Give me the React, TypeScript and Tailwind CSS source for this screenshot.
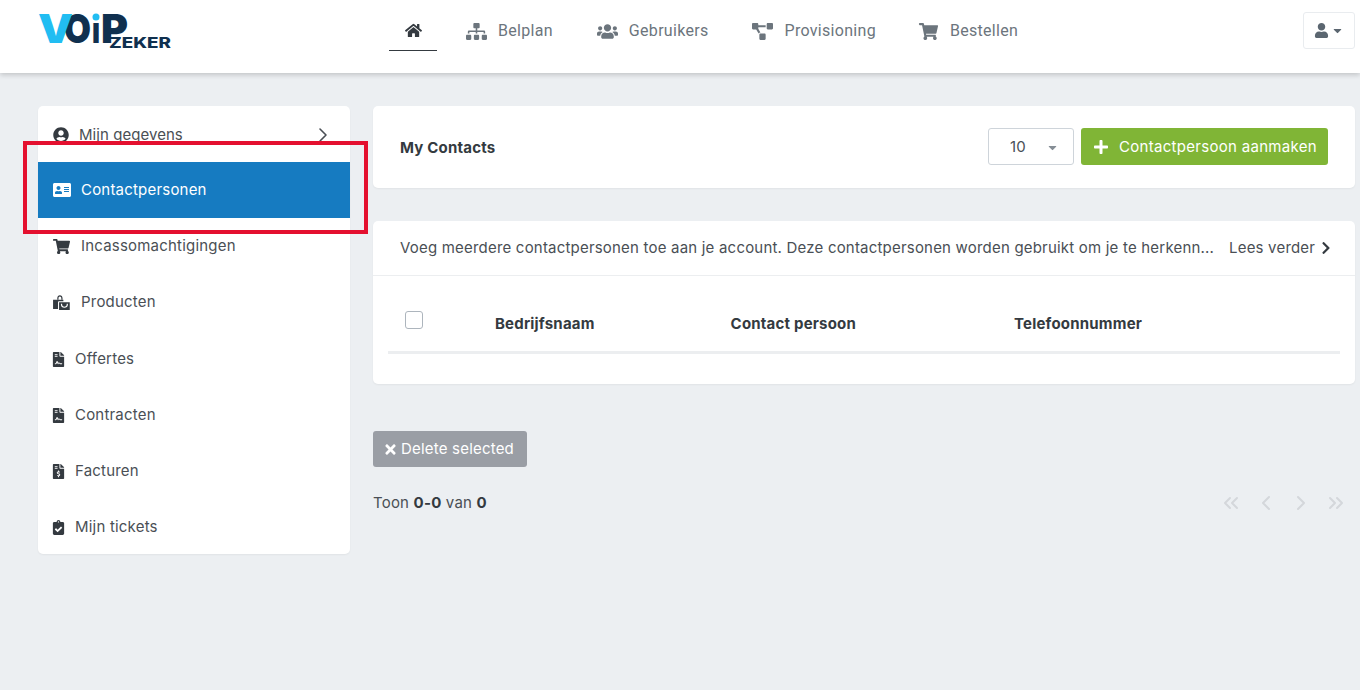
import type { IconType } from 'react-icons';
import { ChevronRight, ChevronLeft, ChevronsLeft, ChevronsRight } from 'lucide-react';
import {
  FaAddressCard,
  FaCaretDown,
  FaChevronRight,
  FaClipboardCheck,
  FaFileContract,
  FaFileInvoiceDollar,
  FaHome,
  FaPlus,
  FaProjectDiagram,
  FaShoppingCart,
  FaSitemap,
  FaTimes,
  FaUser,
  FaUserCircle,
  FaUsers,
} from 'react-icons/fa';

function BagsIcon({ className }: { className?: string }) {
  return (
    <svg viewBox="0 0 18 16" width="17" height="15" className={className} fill="currentColor">
      <path d="M4.5 5V3.5C4.5 1.6 5.7.3 7.3.3s2.8 1.3 2.8 3.2V5h-1.3V3.5c0-1.1-.6-1.9-1.5-1.9s-1.5.8-1.5 1.9V5z" />
      <path d="M0 5h11v1.6H6.2a.9.9 0 0 0-.9.9V15H0z" />
      <path d="M6.4 7.6h11.4V16H6.4zm2 1.6v1.2c0 1.9 1.5 3.3 3.7 3.3s3.7-1.4 3.7-3.3V9.2h-1.3v1.2c0 1.1-1 2-2.4 2s-2.4-.9-2.4-2V9.2z" />
    </svg>
  );
}

const navItems: { label: string; icon: IconType; gap: string }[] = [
  { label: 'Belplan', icon: FaSitemap, gap: 'ml-[29px]' },
  { label: 'Gebruikers', icon: FaUsers, gap: 'ml-[44px]' },
  { label: 'Provisioning', icon: FaProjectDiagram, gap: 'ml-[44px]' },
  { label: 'Bestellen', icon: FaShoppingCart, gap: 'ml-[42px]' },
];

const sideItems: { label: string; icon: IconType | typeof BagsIcon; size: string; textGap: string; active?: boolean; low?: boolean }[] = [
  { label: 'Contactpersonen', icon: FaAddressCard, size: 'text-[18px]', textGap: 'w-[28px]', active: true },
  { label: 'Incassomachtigingen', icon: FaShoppingCart, size: 'text-[17px]', textGap: 'w-[28px]' },
  { label: 'Producten', icon: BagsIcon, size: 'text-[15px]', textGap: 'w-[28px]' },
  { label: 'Offertes', icon: FaFileContract, size: 'text-[15px] -ml-[2px]', textGap: 'w-[22px]', low: true },
  { label: 'Contracten', icon: FaFileContract, size: 'text-[15px] -ml-[2px]', textGap: 'w-[22px]', low: true },
  { label: 'Facturen', icon: FaFileInvoiceDollar, size: 'text-[15px] -ml-[2px]', textGap: 'w-[22px]', low: true },
  { label: 'Mijn tickets', icon: FaClipboardCheck, size: 'text-[15px] -ml-[2px]', textGap: 'w-[22px]', low: true },
];

function Logo() {
  const heavy = 'Inter';
  return (
    <svg width="136" height="38" viewBox="0 0 136 38" className="block">
      <text x="27" y="31" fontFamily={heavy} fontWeight="900" fontSize="40" fill="#10304f" textLength="27" lengthAdjust="spacingAndGlyphs">O</text>
      <text x="1" y="31" fontFamily={heavy} fontWeight="900" fontSize="40" fill="#21bdf2" textLength="35" lengthAdjust="spacingAndGlyphs">V</text>
      <text x="55" y="31" fontFamily={heavy} fontWeight="900" fontSize="36" fill="#10304f" textLength="8" lengthAdjust="spacingAndGlyphs">ı</text>
      <circle cx="59" cy="5" r="3.5" fill="#21bdf2" />
      <text x="64" y="31" fontFamily={heavy} fontWeight="900" fontSize="40" fill="#10304f" textLength="27" lengthAdjust="spacingAndGlyphs">P</text>
      <text x="72" y="36" fontFamily={heavy} fontWeight="800" fontSize="15" fill="#10304f" textLength="62" lengthAdjust="spacingAndGlyphs">ZEKER</text>
    </svg>
  );
}

function Header() {
  return (
    <header className="flex h-[73px] items-start bg-white shadow-[0_2px_5px_rgba(0,0,0,0.18)]">
      <div className="ml-[37px] mt-[12px] w-[352px]">
        <Logo />
      </div>
      <nav className="flex h-[51px] items-center font-['Roboto',sans-serif] text-[16px] tracking-[0.3px] text-[#6c757d]">
        <div className="flex h-full w-[48px] items-center justify-center border-b border-[#343a40] pt-[10px] text-[#343a40]">
          <FaHome className="text-[17px]" />
        </div>
        {navItems.map((item) => (
          <div key={item.label} className={`flex items-center pt-[11px] ${item.gap}`}>
            <item.icon className="w-[21px] text-[17px]" />
            <span className="ml-[11px]">{item.label}</span>
          </div>
        ))}
      </nav>
      <button className="ml-auto mr-[5px] mt-[12px] flex h-[37px] w-[52px] items-center justify-center rounded-[3px] border border-[#e9ecef] text-[#5b6670]">
        <FaUser className="text-[15px]" />
        <FaCaretDown className="ml-[2px] text-[13px]" />
      </button>
    </header>
  );
}

function Sidebar() {
  return (
    <aside className="relative h-[448px] w-[312px] shrink-0 rounded-[5px] bg-white text-[15px] tracking-[0.2px] shadow-[0_1px_2px_rgba(0,0,0,0.05)]">
      <div className="flex h-[56px] items-center pl-[15px] pr-[15px] pt-[2px]">
        <FaUserCircle className="w-[16px] text-[16px] text-[#343a40]" />
        <span className="ml-[10px] tracking-[0.05px] text-[#4a4f55]">Mijn gegevens</span>
        <ChevronRight className="ml-auto h-[24px] w-[24px] text-[#4a4f55]" strokeWidth={1.6} />
      </div>
      {sideItems.map((item) => (
        <div
          key={item.label}
          className={`flex h-[56px] items-center pl-[15px] ${item.low ? 'pt-[2px]' : ''} ${item.active ? 'bg-[#167bc1] text-white' : 'text-[#4a4f55]'}`}
        >
          <span className={`flex shrink-0 ${item.textGap}`}>
            <item.icon className={`${item.size} ${item.active ? 'text-white' : 'text-[#343a40]'}`} />
          </span>
          <span>{item.label}</span>
        </div>
      ))}
    </aside>
  );
}

function Main() {
  return (
    <main className="ml-[23px] w-[982px] text-[15px] tracking-[0.2px]">
      <section className="flex h-[82px] items-start rounded-[5px] bg-white pl-[27px] pr-[27px] pt-[22px] shadow-[0_1px_2px_rgba(0,0,0,0.05)]">
        <h1 className="mt-[1px] leading-[37px] font-bold text-[#343a40]">My Contacts</h1>
        <div className="ml-auto flex h-[37px] w-[86px] items-center justify-between rounded-[3px] border border-[#ced4da] pl-[21px] pr-[14px] pt-[1px] text-[#495057]">
          10
          <FaCaretDown className="text-[13px] text-[#868e96]" />
        </div>
        <button className="ml-[7px] flex h-[37px] w-[247px] items-center rounded-[3px] bg-[#80b536] pl-[12px] pt-[1px] tracking-[0.3px] text-white">
          <FaPlus className="text-[16px]" />
          <span className="ml-[10px]">Contactpersoon aanmaken</span>
        </button>
      </section>

      <section className="mt-[33px] h-[163px] rounded-[5px] bg-white shadow-[0_1px_2px_rgba(0,0,0,0.05)]">
        <div className="flex h-[55px] items-center border-b border-[#eceef0] pl-[27px] pr-[22px] text-[#4a4f55]">
          <span className="w-[829px] whitespace-nowrap">
            Voeg meerdere contactpersonen toe aan je account. Deze contactpersonen worden gebruikt om je te herkenn...
          </span>
          <span className="whitespace-nowrap">Lees verder</span>
          <FaChevronRight className="ml-auto text-[14px] text-[#343a40]" />
        </div>
        <div className="mx-[15px] flex h-[78px] items-center border-b-[3px] border-[#eceef0] pt-[22px] font-bold text-[#343a40]">
          <span className="mb-[9px] ml-[17px] block h-[18px] w-[18px] rounded-[3px] border border-[#adb5bd] bg-white" />
          <span className="ml-[72px]">Bedrijfsnaam</span>
          <span className="ml-[136px]">Contact persoon</span>
          <span className="ml-[158px]">Telefoonnummer</span>
        </div>
      </section>

      <button className="mt-[47px] flex h-[36px] w-[154px] items-center rounded-[3px] bg-[#9a9ea5] pl-[10px] text-white">
        <FaTimes className="mr-[3px] text-[15px]" />
        Delete selected
      </button>

      <div className="mt-[25px] flex h-[22px] items-center text-[#4a4f55]">
        <span>
          Toon <b className="text-[#343a40]">0-0</b> van <b className="text-[#343a40]">0</b>
        </span>
        <div className="ml-auto mr-[7px] flex items-center gap-[11px] text-[#d4d7db]">
          <ChevronsLeft className="h-[24px] w-[24px]" />
          <ChevronLeft className="h-[24px] w-[24px]" />
          <ChevronRight className="h-[24px] w-[24px]" />
          <ChevronsRight className="h-[24px] w-[24px]" />
        </div>
      </div>
    </main>
  );
}

export default function App() {
  return (
    <div className="relative h-[690px] w-[1360px] overflow-hidden bg-[#eceff2] font-['Inter',sans-serif]">
      <Header />
      <div className="ml-[38px] mt-[33px] flex items-start">
        <Sidebar />
        <Main />
      </div>
      <div className="absolute left-[23px] top-[141px] h-[93px] w-[345px] border-[4px] border-[#e4102f]" />
    </div>
  );
}
